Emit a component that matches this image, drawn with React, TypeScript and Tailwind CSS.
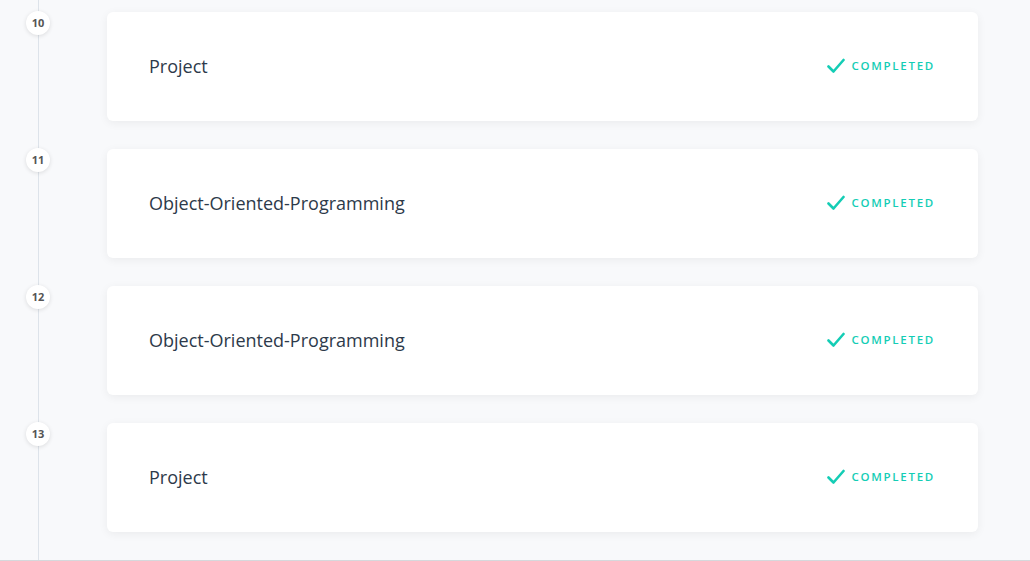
const lessons = [
  { num: 10, title: "Project" },
  { num: 11, title: "Object-Oriented-Programming" },
  { num: 12, title: "Object-Oriented-Programming" },
  { num: 13, title: "Project" },
];

function CheckIcon() {
  return (
    <svg width="18" height="16" viewBox="0 0 18 16" fill="none">
      <path
        d="M1.5 8.5 L6.5 13.5 L16.5 2"
        stroke="currentColor"
        strokeWidth="2.6"
        strokeLinecap="round"
        strokeLinejoin="round"
      />
    </svg>
  );
}

export default function App() {
  return (
    <div
      className="relative h-[561px] overflow-hidden bg-[#f8f9fb] border-b border-[#d6d8dc]"
      style={{ fontFamily: '"Open Sans", sans-serif' }}
    >
      {/* timeline rail */}
      <div className="absolute left-[38px] top-0 bottom-0 w-px bg-[#dde3ea]" />

      <div className="flex flex-col gap-[28px] pt-[12px]">
        {lessons.map((l) => (
          <div key={l.num} className="flex">
            <div className="w-[107px] shrink-0 relative">
              <div className="absolute left-[26px] top-[-1px] w-[24px] h-[24px] rounded-full bg-white shadow-[0_1px_4px_rgba(0,0,0,0.12)] flex items-center justify-center text-[11px] font-bold text-[#555]">
                {l.num}
              </div>
            </div>
            <div className="w-[871px] h-[109px] bg-white rounded-[6px] shadow-[0_2px_10px_rgba(0,0,0,0.06)] flex items-center justify-between pl-[42px] pr-[43px]">
              <h3 className="text-[18px] text-[#2d3a4a]">{l.title}</h3>
              <span className="flex items-center gap-[6px] mb-[2px] text-[#14cdb5] text-[11.5px] font-semibold tracking-[0.15em]">
                <span className="ml-[1px] flex">
                  <CheckIcon />
                </span>
                COMPLETED
              </span>
            </div>
          </div>
        ))}
      </div>
    </div>
  );
}
